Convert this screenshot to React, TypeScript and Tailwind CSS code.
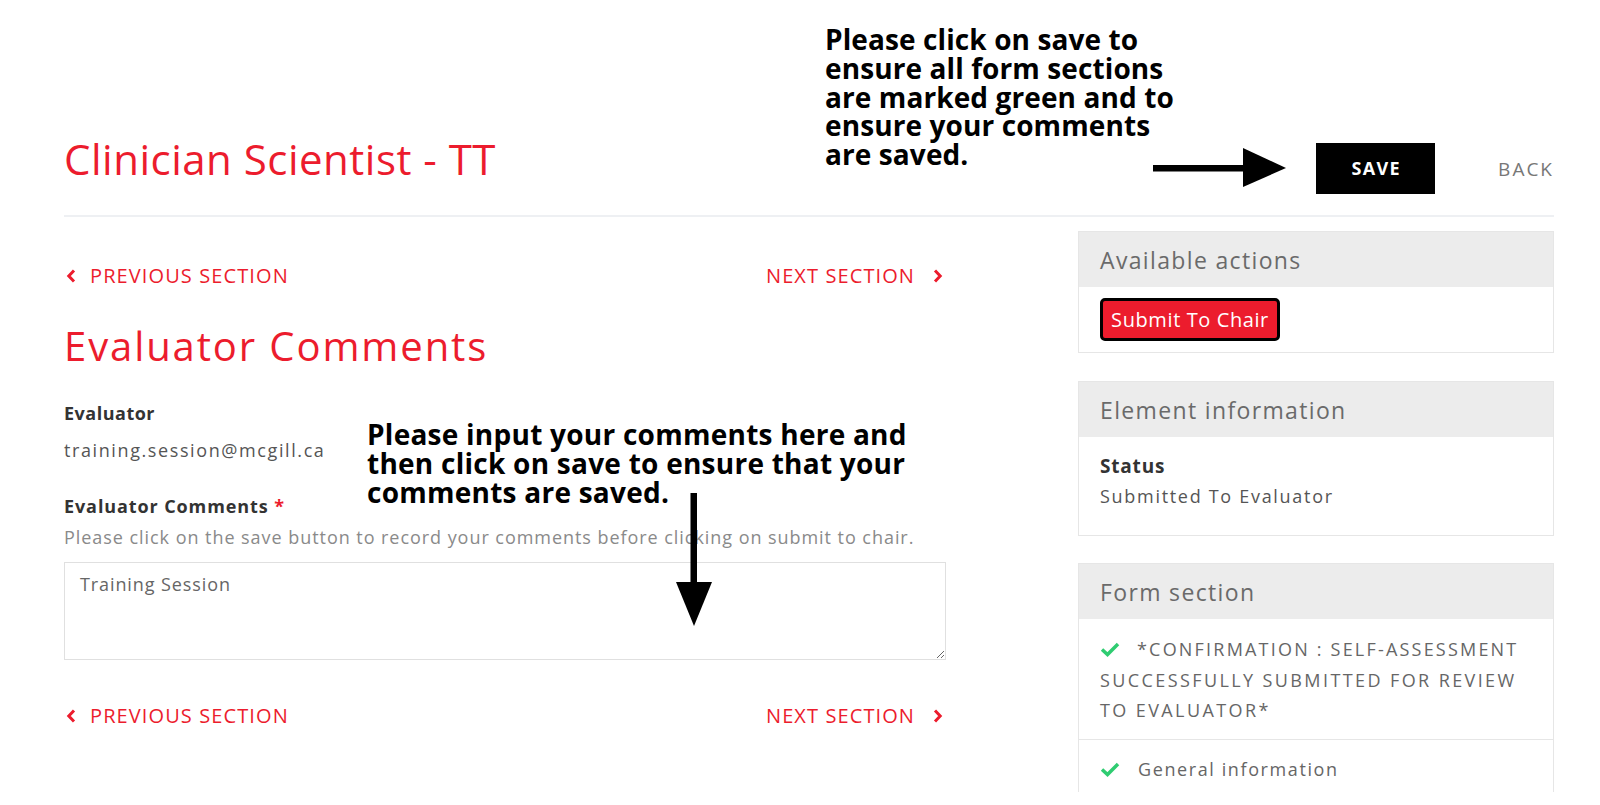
import React from 'react';

// Petits chevrons rouges des liens de navigation
const ChevronLeft = () => (
    <svg width="10" height="14" viewBox="0 0 10 14" className="shrink-0">
        <path d="M8 1.5 2.8 7 8 12.5" fill="none" stroke="#ec1c2d" strokeWidth="3" />
    </svg>
);

const ChevronRight = () => (
    <svg width="10" height="14" viewBox="0 0 10 14" className="shrink-0">
        <path d="M2 1.5 7.2 7 2 12.5" fill="none" stroke="#ec1c2d" strokeWidth="3" />
    </svg>
);

const Check = () => (
    <svg width="20" height="15" viewBox="0 0 20 15" className="inline-block align-[-1px]">
        <path d="M2 7.5 7.5 12.5 18 2" fill="none" stroke="#2fcc71" strokeWidth="3.5" />
    </svg>
);

const SectionNav = ({ className }: { className?: string }) => (
    <div
        className={
            'flex items-center justify-between pl-[2px] pr-[3px] text-[20px] leading-[24px] tracking-[1.1px] text-[#ec1c2d] uppercase ' +
            (className ?? '')
        }
    >
        <a className="flex items-center">
            <ChevronLeft />
            <span className="ml-[14px]">Previous section</span>
        </a>
        <a className="flex items-center">
            <span>Next section</span>
            <span className="ml-[18px] flex">
                <ChevronRight />
            </span>
        </a>
    </div>
);

const Panel = ({
    title,
    children,
    className,
}: {
    title: string;
    children: React.ReactNode;
    className?: string;
}) => (
    <div className={'border border-[#e6e6e6] bg-white ' + (className ?? '')}>
        <div className="flex h-[55px] items-center bg-[#ececec] px-[21px]">
            <h3 className="text-[23px] leading-[30px] tracking-[1.35px] text-[#6a6a6a]">
                {title}
            </h3>
        </div>
        {children}
    </div>
);

export default function App() {
    return (
        <div
            className="relative h-[805px] w-[1600px] overflow-hidden bg-white"
            style={{ fontFamily: '"Open Sans", "Noto Sans", sans-serif' }}
        >
            {/* En-tête */}
            <div className="mr-[46px] ml-[64px] flex items-center border-b-2 border-[#eef0f3] pt-[143px] pb-[21px]">
                <h1 className="-mt-[20px] text-[42px] leading-[42px] tracking-[0.5px] text-[#ec1c2d]">
                    Clinician Scientist - TT
                </h1>
                <div className="ml-auto flex items-center">
                    <button className="flex h-[51px] w-[119px] items-center justify-center bg-black pl-[1px] text-[18px] font-bold tracking-[1.3px] text-white">
                        SAVE
                    </button>
                    <a className="ml-[63px] text-[19px] leading-[24px] tracking-[2px] text-[#777]">
                        BACK
                    </a>
                </div>
            </div>

            {/* Contenu */}
            <div className="flex gap-[132px] pr-[46px] pl-[64px]">
                {/* Colonne gauche */}
                <div className="w-[882px]">
                    <SectionNav className="mt-[47px]" />

                    <h2 className="mt-[35px] text-[40px] leading-[46px] tracking-[1.9px] text-[#ec1c2d]">
                        Evaluator Comments
                    </h2>

                    <div className="mt-[32px] text-[18px] leading-[24px] font-bold tracking-[0.5px] text-[#333]">
                        Evaluator
                    </div>
                    <div className="mt-[13px] text-[18px] leading-[24px] tracking-[1.6px] text-[#555]">
                        training.session@mcgill.ca
                    </div>

                    <div className="mt-[32px] text-[18px] leading-[24px] font-bold tracking-[0.9px] text-[#333]">
                        Evaluator Comments <span className="text-[#ec1c2d]">*</span>
                    </div>
                    <div className="mt-[7px] text-[18px] leading-[24px] tracking-[0.95px] text-[#8a8a8a]">
                        Please click on the save button to record your comments before clicking on
                        submit to chair.
                    </div>

                    <textarea
                        readOnly
                        defaultValue="Training Session"
                        className="mt-[13px] block h-[98px] w-full border border-[#e0e0e0] px-[15px] pt-[9px] text-[18px] leading-[24px] tracking-[0.9px] text-[#666] outline-none"
                    />

                    <SectionNav className="mt-[44px]" />
                </div>

                {/* Colonne droite */}
                <div className="h-[575px] w-[476px] overflow-hidden pt-[14px]">
                    <Panel title="Available actions">
                        <div className="px-[21px] py-[11px]">
                            <button className="flex h-[43px] w-[180px] items-center justify-center rounded-[5px] border-[3px] border-black bg-[#ec1c2d] text-[20px] tracking-[0.6px] text-white">
                                Submit To Chair
                            </button>
                        </div>
                    </Panel>

                    <Panel title="Element information" className="mt-[28px]">
                        <div className="px-[21px] pt-[16px] pb-[25px]">
                            <div className="text-[19px] leading-[26px] font-bold tracking-[0.8px] text-[#333]">
                                Status
                            </div>
                            <div className="mt-[3px] text-[18px] leading-[28px] tracking-[1.7px] text-[#555]">
                                Submitted To Evaluator
                            </div>
                        </div>
                    </Panel>

                    <Panel title="Form section" className="mt-[27px]">
                        <div className="border-b border-[#e6e6e6] px-[21px] pt-[15px] pb-[13px] text-[18px] leading-[30.5px] tracking-[2.4px] text-[#666] uppercase">
                            <Check />
                            <span className="ml-[17px] tracking-[2.2px]">
                                *Confirmation : Self-assessment
                            </span>
                            <br />
                            Successfully submitted for review
                            <br />
                            To evaluator*
                        </div>
                        <div className="px-[21px] pt-[14px] pb-[13px] text-[18px] leading-[30.5px] tracking-[1.6px] text-[#666]">
                            <Check />
                            <span className="ml-[18px]">General information</span>
                        </div>
                    </Panel>
                </div>
            </div>

            {/* Annotations du tutoriel */}
            <p className="absolute top-[25px] left-[825px] text-[28px] leading-[28.75px] font-bold tracking-[0.1px] text-black">
                Please click on save to
                <br />
                ensure all form sections
                <br />
                are marked green and to
                <br />
                ensure your comments
                <br />
                are saved.
            </p>
            <svg className="absolute top-[145px] left-[1150px]" width="140" height="45" viewBox="0 0 140 45">
                <rect x="3" y="20" width="95" height="6.5" fill="#000" />
                <path d="M93 3 136 23 93 42 Z" fill="#000" />
            </svg>

            <p className="absolute top-[420px] left-[367px] text-[28px] leading-[29px] font-bold tracking-[0.25px] text-black">
                Please input your comments here and
                <br />
                then click on save to ensure that your
                <br />
                comments are saved.
            </p>
            <svg className="absolute top-[492px] left-[674px]" width="40" height="136" viewBox="0 0 40 136">
                <rect x="16.5" y="1" width="6.5" height="95" fill="#000" />
                <path d="M2 90 20 134 38 90 Z" fill="#000" />
            </svg>
        </div>
    );
}
